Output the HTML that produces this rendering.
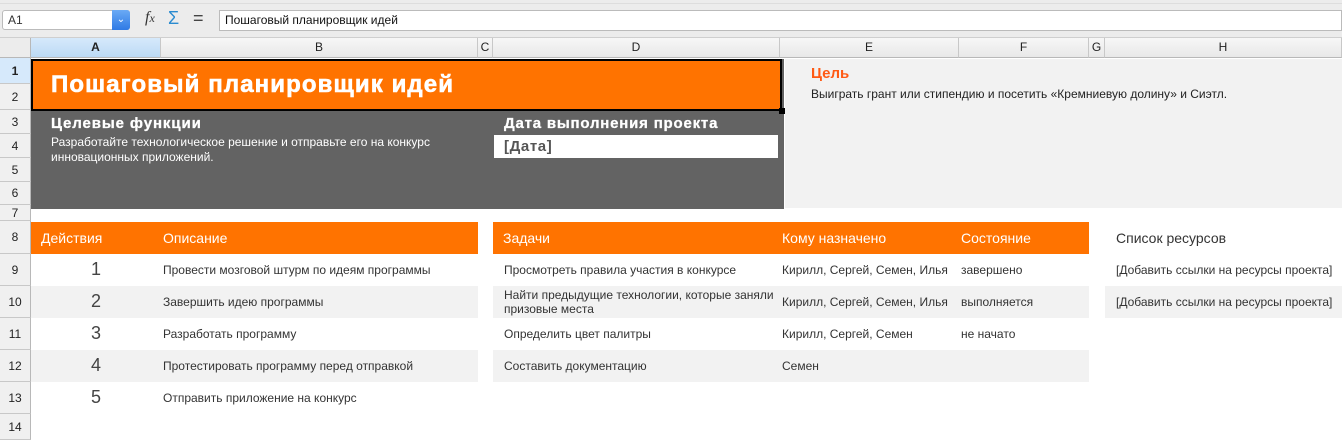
<!DOCTYPE html>
<html><head><meta charset="utf-8"><style>
*{margin:0;padding:0;box-sizing:border-box}
body{width:1342px;height:440px;overflow:hidden;background:#fff;font-family:"Liberation Sans","Noto Sans CJK SC",sans-serif;position:relative;color:#333}
.a{position:absolute}
.ch{position:absolute;top:38px;height:20px;background:linear-gradient(#f7f7f7,#e8e8e8);border-right:1px solid #c8c8c8;border-bottom:1px solid #b8b8b8;font-size:12px;text-align:center;line-height:19px;color:#222}
.rh{position:absolute;left:0;width:31px;background:#f0f0f0;border-right:1px solid #b8b8b8;border-bottom:1px solid #c8c8c8;font-size:12px;text-align:center;color:#222}
.t{position:absolute;font-size:12px;color:#333;white-space:nowrap}
.h{position:absolute;font-size:14px;color:#fff;white-space:nowrap}
.g{position:absolute;background:#f2f2f2}
.n{position:absolute;font-size:18px;color:#444;width:130px;text-align:center;left:31px}
</style></head><body>
<div class="a" style="left:0;top:0;width:1342px;height:38px;background:#ececec;border-bottom:1px solid #cfcfcf"></div>
<div class="a" style="left:0;top:3px;width:1342px;height:1px;background:#ddd"></div>
<div class="a" style="left:2px;top:10px;width:128px;height:20px;background:#fff;border:1px solid #bbb;border-radius:3px;font-size:12px;line-height:18px;padding-left:5px">A1</div>
<div class="a" style="left:112px;top:10px;width:18px;height:20px;background:linear-gradient(#6aaaf5,#2f7ae5);border-radius:0 3px 3px 0;color:#fff;font-size:10px;text-align:center;line-height:20px">&#8964;</div>
<div class="a" style="left:145px;top:9px;font-size:16px;font-style:italic;font-family:'Liberation Serif',serif;color:#333">f<span style="font-size:12px">x</span></div>
<div class="a" style="left:168px;top:8px;font-size:18px;color:#2a8bd0">&Sigma;</div>
<div class="a" style="left:193px;top:8px;font-size:18px;color:#444">=</div>
<div class="a" style="left:219px;top:10px;width:1123px;height:21px;background:#fff;border:1px solid #bbb;font-size:12px;line-height:19px;padding-left:5px;color:#111">Пошаговый планировщик идей</div>
<div class="a" style="left:0;top:38px;width:31px;height:20px;background:#ececec;border-right:1px solid #b8b8b8;border-bottom:1px solid #b8b8b8"></div>
<div class="ch" style="left:31px;width:130px;background:linear-gradient(#d6e9fb,#bcdaf5);font-weight:bold">A</div>
<div class="ch" style="left:161px;width:317px">B</div>
<div class="ch" style="left:478px;width:15px">C</div>
<div class="ch" style="left:493px;width:287px">D</div>
<div class="ch" style="left:780px;width:179px">E</div>
<div class="ch" style="left:959px;width:130px">F</div>
<div class="ch" style="left:1089px;width:16px">G</div>
<div class="ch" style="left:1105px;width:237px">H</div>
<div class="rh" style="top:58px;height:26px;line-height:26px;background:#d6e9fb;font-weight:bold">1</div>
<div class="rh" style="top:84px;height:26px;line-height:26px">2</div>
<div class="rh" style="top:110px;height:24px;line-height:24px">3</div>
<div class="rh" style="top:134px;height:24px;line-height:24px">4</div>
<div class="rh" style="top:158px;height:24px;line-height:24px">5</div>
<div class="rh" style="top:182px;height:23px;line-height:23px">6</div>
<div class="rh" style="top:205px;height:16px;line-height:16px">7</div>
<div class="rh" style="top:221px;height:33px;line-height:33px">8</div>
<div class="rh" style="top:254px;height:32px;line-height:32px">9</div>
<div class="rh" style="top:286px;height:32px;line-height:32px">10</div>
<div class="rh" style="top:318px;height:32px;line-height:32px">11</div>
<div class="rh" style="top:350px;height:32px;line-height:32px">12</div>
<div class="rh" style="top:382px;height:32px;line-height:32px">13</div>
<div class="rh" style="top:414px;height:26px;line-height:26px">14</div>
<div class="a" style="left:31px;top:59px;width:753px;height:150px;background:#636363"></div>
<div class="a" style="left:31px;top:59px;width:751px;height:52px;background:#ff7300;border:2px solid #000"></div>
<div class="a" style="left:779px;top:108px;width:6px;height:6px;background:#000"></div>
<div class="a" style="left:51px;top:71px;font-size:24px;font-weight:bold;color:#fff;letter-spacing:1.1px;-webkit-text-stroke:0.6px #fff">Пошаговый планировщик идей</div>
<div class="a" style="left:51px;top:115px;font-size:15px;font-weight:bold;color:#fff;letter-spacing:0.9px;-webkit-text-stroke:0.3px #fff">Целевые функции</div>
<div class="a" style="left:51px;top:135px;font-size:12px;color:#fff;line-height:15px">Разработайте технологическое решение и отправьте его на конкурс<br>инновационных приложений.</div>
<div class="a" style="left:504px;top:115px;font-size:15px;font-weight:bold;color:#fff;letter-spacing:0.8px;-webkit-text-stroke:0.3px #fff">Дата выполнения проекта</div>
<div class="a" style="left:494px;top:135px;width:284px;height:23px;background:#fff;font-size:15px;font-weight:bold;color:#555;padding-left:10px;line-height:23px;letter-spacing:0.6px">[Дата]</div>
<div class="g" style="left:785px;top:59px;width:557px;height:149px"></div>
<div class="a" style="left:811px;top:65px;font-size:15px;font-weight:bold;color:#ff5a14">Цель</div>
<div class="t" style="left:811px;top:87px;color:#222">Выиграть грант или стипендию и посетить «Кремниевую долину» и Сиэтл.</div>
<div class="a" style="left:31px;top:222px;width:447px;height:32px;background:#ff7300"></div>
<div class="a" style="left:493px;top:222px;width:596px;height:32px;background:#ff7300"></div>
<div class="h" style="left:41px;top:230px">Действия</div>
<div class="h" style="left:163px;top:230px">Описание</div>
<div class="h" style="left:503px;top:230px">Задачи</div>
<div class="h" style="left:782px;top:230px">Кому назначено</div>
<div class="h" style="left:961px;top:230px">Состояние</div>
<div class="a" style="left:1116px;top:230px;font-size:14px;color:#333">Список ресурсов</div>
<div class="g" style="left:31px;top:286px;width:447px;height:32px"></div>
<div class="g" style="left:31px;top:350px;width:447px;height:32px"></div>
<div class="g" style="left:493px;top:286px;width:596px;height:32px"></div>
<div class="g" style="left:493px;top:350px;width:596px;height:32px"></div>
<div class="g" style="left:1105px;top:286px;width:237px;height:32px"></div>
<div class="n" style="top:259px">1</div><div class="n" style="top:291px">2</div><div class="n" style="top:323px">3</div><div class="n" style="top:355px">4</div><div class="n" style="top:387px">5</div>
<div class="t" style="left:163px;top:263px">Провести мозговой штурм по идеям программы</div>
<div class="t" style="left:163px;top:295px">Завершить идею программы</div>
<div class="t" style="left:163px;top:327px">Разработать программу</div>
<div class="t" style="left:163px;top:359px">Протестировать программу перед отправкой</div>
<div class="t" style="left:163px;top:391px">Отправить приложение на конкурс</div>
<div class="t" style="left:504px;top:263px">Просмотреть правила участия в конкурсе</div>
<div class="t" style="left:504px;top:288px;line-height:14px">Найти предыдущие технологии, которые заняли<br>призовые места</div>
<div class="t" style="left:504px;top:327px">Определить цвет палитры</div>
<div class="t" style="left:504px;top:359px">Составить документацию</div>
<div class="t" style="left:782px;top:263px">Кирилл, Сергей, Семен, Илья</div>
<div class="t" style="left:782px;top:295px">Кирилл, Сергей, Семен, Илья</div>
<div class="t" style="left:782px;top:327px">Кирилл, Сергей, Семен</div>
<div class="t" style="left:782px;top:359px">Семен</div>
<div class="t" style="left:961px;top:263px">завершено</div>
<div class="t" style="left:961px;top:295px">выполняется</div>
<div class="t" style="left:961px;top:327px">не начато</div>
<div class="t" style="left:1116px;top:263px">[Добавить ссылки на ресурсы проекта]</div>
<div class="t" style="left:1116px;top:295px">[Добавить ссылки на ресурсы проекта]</div>
</body></html>
